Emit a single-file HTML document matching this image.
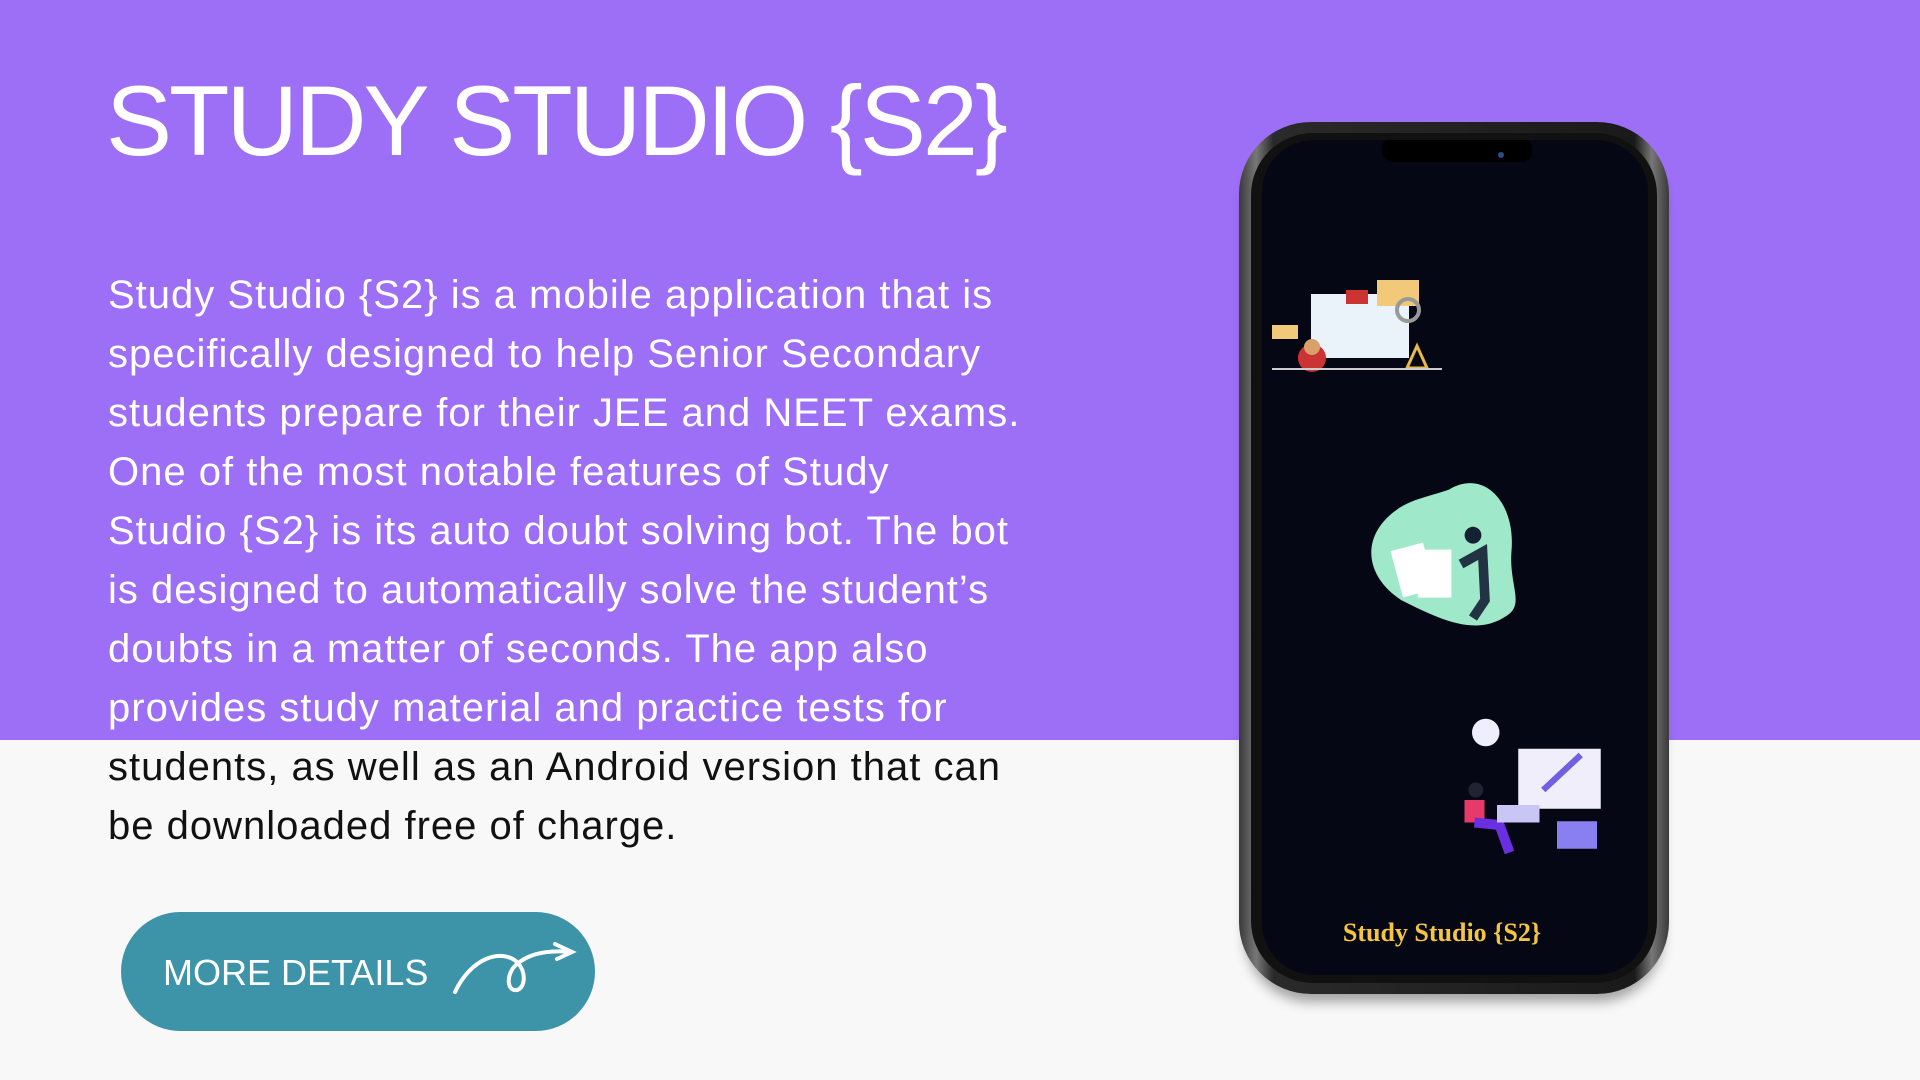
<!DOCTYPE html>
<html><head><meta charset="utf-8"><style>
*{margin:0;padding:0;box-sizing:border-box}
body{width:1920px;height:1080px;position:relative;overflow:hidden;background:#f8f8f8;font-family:"Liberation Sans",sans-serif}
#top{position:absolute;left:0;top:0;width:1920px;height:740px;background:#9d6ef6}
h1{position:absolute;left:106px;top:64px;font-size:99px;font-weight:400;color:#fff;letter-spacing:-3px;white-space:nowrap}
#p{position:absolute;left:108px;top:266px;font-size:40px;line-height:59px;letter-spacing:1px;white-space:nowrap}
#p .w{color:#fff}#p .b{color:#111}
#btn{position:absolute;left:121px;top:912px;width:474px;height:119px;border-radius:60px;background:#3d93a8}
#btn span{position:absolute;left:42px;top:40px;color:#fff;font-size:36px}
#phone{position:absolute;left:1239px;top:122px;width:430px;height:872px;border-radius:72px;background:linear-gradient(90deg,#3a3a3a,#777 4%,#2a2a2a 8%,#1a1a1a 92%,#777 96%,#3a3a3a);box-shadow:0 14px 12px -6px rgba(0,0,0,.35)}
#inner{position:absolute;left:1251px;top:133px;width:406px;height:850px;border-radius:62px;background:#111}
#screen{position:absolute;left:1262px;top:140px;width:386px;height:835px;border-radius:52px;background:#050814;overflow:hidden}
#cap{position:absolute;left:1242px;top:918px;width:400px;text-align:center;color:#f5c542;font-family:"Liberation Serif",serif;font-weight:bold;font-size:26px}
</style></head><body>
<div id="top"></div>
<h1>STUDY STUDIO {S2}</h1>
<div id="p"><span class="w">Study Studio {S2} is a mobile application that is<br>specifically designed to help Senior Secondary<br>students prepare for their JEE and NEET exams.<br>One of the most notable features of Study<br>Studio {S2} is its auto doubt solving bot. The bot<br>is designed to automatically solve the student’s<br>doubts in a matter of seconds. The app also<br>provides study material and practice tests for</span><br><span class="b">students, as well as an Android version that can<br>be downloaded free of charge.</span></div>
<div id="btn"><span>MORE DETAILS</span>
<svg style="position:absolute;left:330px;top:26px" width="130" height="60" viewBox="0 0 130 60"><path d="M4 54 C20 20 50 10 66 24 C76 34 74 50 66 52 C56 54 54 36 66 26 C80 14 100 12 120 14 M104 6 L121 14 L106 21" fill="none" stroke="#fff" stroke-width="4" stroke-linecap="round"/></svg></div>
<div id="phone"></div><div id="inner"></div>
<div id="screen">
<svg width="386" height="835" viewBox="0 0 386 835" style="position:absolute;left:0;top:0">
<rect x="120" y="-2" width="150" height="24" rx="10" fill="#000"/>
<circle cx="239" cy="15" r="3" fill="#2a4a8a"/>
<rect x="49" y="154" width="98" height="64" fill="#eaf2fa"/>
<rect x="10" y="185" width="26" height="14" fill="#f2c879"/>
<rect x="115" y="140" width="42" height="26" fill="#f2c879"/>
<rect x="84" y="150" width="22" height="14" fill="#c33"/>
<circle cx="50" cy="218" r="14" fill="#c33"/><circle cx="50" cy="207" r="8" fill="#d9a06b"/>
<circle cx="146" cy="170" r="11" fill="none" stroke="#999" stroke-width="4"/>
<path d="M145 228 L165 228 L155 206 Z" fill="none" stroke="#e8b84c" stroke-width="3"/>
<rect x="10" y="228" width="170" height="2" fill="#ccc"/>
<g transform="translate(43 -68) scale(1.2)">
<path d="M120 348 C150 330 176 360 172 400 C170 430 185 445 165 455 C140 470 110 455 80 440 C50 420 48 390 70 370 C85 356 100 355 120 348 Z" fill="#9fe8c9"/>
<rect x="76" y="395" width="28" height="40" fill="#fff" transform="rotate(-15 90 415)"/>
<rect x="94" y="398" width="28" height="40" fill="#fff"/>
<path d="M130 410 L148 400 L150 440 L140 455" stroke="#234" stroke-width="8" fill="none"/>
<circle cx="140" cy="386" r="7" fill="#123"/>
</g>
<g transform="translate(-50 -150) scale(1.25)">
<circle cx="219" cy="594" r="11" fill="#eef"/>
<rect x="245" y="607" width="66" height="48" fill="#f0eefa"/>
<path d="M265 640 L295 612" stroke="#7060e0" stroke-width="5"/>
<rect x="276" y="665" width="32" height="22" fill="#8a7ff0"/>
<circle cx="211" cy="640" r="6" fill="#223"/>
<rect x="202" y="648" width="16" height="18" fill="#e83a6a"/>
<path d="M210 666 L230 668 L238 690" stroke="#6a2fe0" stroke-width="8" fill="none"/>
<rect x="228" y="652" width="34" height="14" fill="#c9c5f5"/>
</g>
</svg></div>
<div id="cap">Study Studio {S2}</div>
</body></html>
